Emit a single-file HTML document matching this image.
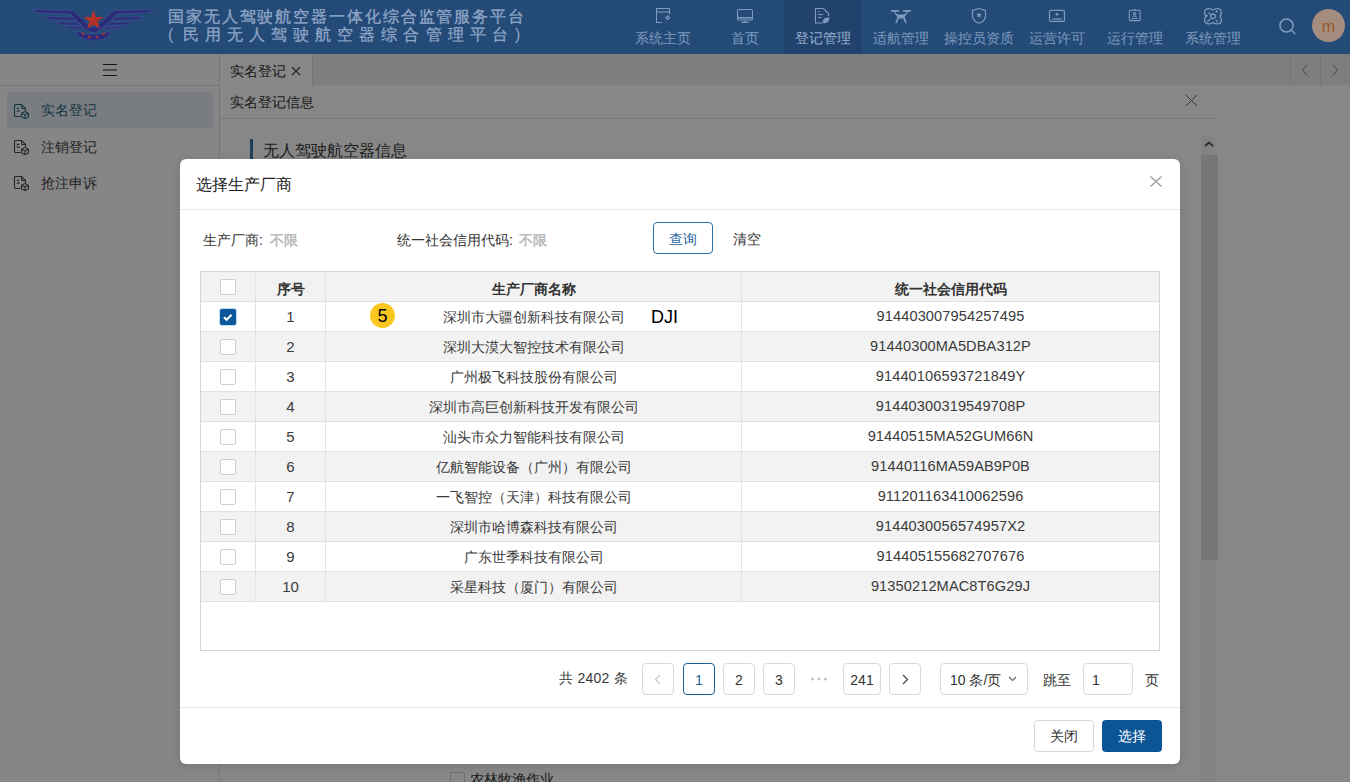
<!DOCTYPE html>
<html><head><meta charset="utf-8">
<style>
*{box-sizing:border-box;margin:0;padding:0}
html,body{width:1350px;height:782px;overflow:hidden;background:#fff;font-family:"Liberation Sans",sans-serif;color:#333}
.t{position:absolute;white-space:nowrap;line-height:1}
#hdr{position:absolute;left:0;top:0;width:1350px;height:54px;background:#244a77}
#side{position:absolute;left:0;top:54px;width:220px;height:728px;background:#fdfdfd;border-right:1px solid #e0e0e0}
#tabs{position:absolute;left:220px;top:54px;width:1130px;height:32px;background:#efefef;border-bottom:1px solid #d4d4d4}
#main{position:absolute;left:220px;top:85px;width:1130px;height:697px;background:#fff}
#mask{position:absolute;left:0;top:0;width:1350px;height:782px;background:rgba(0,0,0,.47)}
#dlg{position:absolute;left:180px;top:159px;width:1000px;height:605px;background:#fff;border-radius:6px;box-shadow:0 2px 8px rgba(0,0,0,.12)}
.nav{position:absolute;top:0;height:54px;text-align:center;color:#7f9abd;font-size:14px}
.nav span{position:absolute;left:0;right:0;top:31px;line-height:14px}
</style></head><body>
<div id="side">
  <svg style="position:absolute;left:102px;top:9px" width="16" height="14" viewBox="0 0 16 14" stroke="#222" stroke-width="1.1"><path d="M1 1.5h14M1 7h14M1 12.5h14"/></svg>
  <div style="position:absolute;left:0;top:31px;width:219px;height:1px;background:#dcdcdc"></div>
  <div style="position:absolute;left:7px;top:38px;width:206px;height:36px;background:#e5ecf3;border-radius:2px"></div>
  <svg style="position:absolute;left:13px;top:50px" width="18" height="16" viewBox="13 104 18 16" fill="none" stroke="#2c6a7e" stroke-width="1.1"><path d="M20.5 116.5H15.5Q14.5 116.5 14.5 115.5V105.5Q14.5 104.5 15.5 104.5H21.5L25.5 108.5V111"/><path d="M21.5 104.5V107.5Q21.5 108.5 22.5 108.5H25.5"/><path d="M16.8 108.3h2.2M16.8 111.2h3" stroke-width="1.3"/><path d="M21.5 113.3L25 111.6L28.5 113.3V117L25 118.7L21.5 117Z M21.5 113.3L25 115L28.5 113.3 M25 115V118.7"/></svg>
  <svg style="position:absolute;left:13px;top:86px" width="18" height="16" viewBox="13 104 18 16" fill="none" stroke="#4a4a4a" stroke-width="1.1"><path d="M20.5 116.5H15.5Q14.5 116.5 14.5 115.5V105.5Q14.5 104.5 15.5 104.5H21.5L25.5 108.5V111"/><path d="M21.5 104.5V107.5Q21.5 108.5 22.5 108.5H25.5"/><path d="M16.8 108.3h2.2M16.8 111.2h3" stroke-width="1.3"/><path d="M21.5 113.3L25 111.6L28.5 113.3V117L25 118.7L21.5 117Z M21.5 113.3L25 115L28.5 113.3 M25 115V118.7"/></svg>
  <svg style="position:absolute;left:13px;top:122px" width="18" height="16" viewBox="13 104 18 16" fill="none" stroke="#4a4a4a" stroke-width="1.1"><path d="M20.5 116.5H15.5Q14.5 116.5 14.5 115.5V105.5Q14.5 104.5 15.5 104.5H21.5L25.5 108.5V111"/><path d="M21.5 104.5V107.5Q21.5 108.5 22.5 108.5H25.5"/><path d="M16.8 108.3h2.2M16.8 111.2h3" stroke-width="1.3"/><path d="M21.5 113.3L25 111.6L28.5 113.3V117L25 118.7L21.5 117Z M21.5 113.3L25 115L28.5 113.3 M25 115V118.7"/></svg>
  <div class="t" style="left:41px;top:49px;font-size:14px;color:#2c6a7e">实名登记</div>
  <div class="t" style="left:41px;top:86px;font-size:14px;color:#444">注销登记</div>
  <div class="t" style="left:41px;top:122px;font-size:14px;color:#444">抢注申诉</div>
</div>
<div id="tabs">
  <div style="position:absolute;left:0;top:0;width:93px;height:31px;background:#fff;border-right:1px solid #d9d9d9"></div>
  <div class="t" style="left:10px;top:10px;font-size:14px;color:#333">实名登记</div><svg style="position:absolute;left:71px;top:12px" width="10" height="10" viewBox="0 0 10 10" stroke="#444" stroke-width="1.1"><path d="M1 1l8 8M9 1l-8 8"/></svg>
  <div style="position:absolute;left:1070px;top:0;width:1px;height:31px;background:#d9d9d9"></div>
  <div style="position:absolute;left:1100px;top:0;width:1px;height:31px;background:#d9d9d9"></div>
  <svg style="position:absolute;left:1081px;top:10px" width="8" height="12" viewBox="0 0 8 12" fill="none" stroke="#888" stroke-width="1"><path d="M6 1L1.5 6 6 11"/></svg>
  <svg style="position:absolute;left:1111px;top:10px" width="8" height="12" viewBox="0 0 8 12" fill="none" stroke="#888" stroke-width="1"><path d="M2 1l4.5 5L2 11"/></svg>
</div>
<div id="main">
  <div class="t" style="left:10px;top:10px;font-size:14px;color:#333">实名登记信息</div>
  <svg style="position:absolute;left:965px;top:9px" width="13" height="13" viewBox="0 0 13 13" stroke="#666" stroke-width="1"><path d="M1 1l11 11M12 1L1 12"/></svg>
  <div style="position:absolute;left:0;top:33px;width:997px;height:1px;background:#e4e4e4"></div>
  <div style="position:absolute;left:30px;top:54px;width:3px;height:21px;background:#3a7aa6"></div>
  <div class="t" style="left:43px;top:58px;font-size:16px;color:#3a3a3a">无人驾驶航空器信息</div>
  <div style="position:absolute;left:981px;top:50px;width:16px;height:647px;background:#f7f7f7"></div>
  <svg style="position:absolute;left:984px;top:56px" width="10" height="6" viewBox="0 0 10 6" stroke="#555" stroke-width="2" fill="none"><path d="M1 5l4-3.5L9 5"/></svg>
  <div style="position:absolute;left:981px;top:70px;width:17px;height:405px;background:#e0e0e0"></div>
  <div style="position:absolute;left:230px;top:687px;width:15px;height:15px;border:1px solid #ccc;border-radius:2px;background:#fff"></div>
  <div class="t" style="left:250px;top:687px;font-size:14px;color:#333">农林牧渔作业</div>
</div>
<div id="mask"></div>
<div id="hdr">
    <div class="t" style="left:168px;top:9px;font-size:16px;color:#8ea5c5;-webkit-text-stroke:0.35px #8ea5c5;letter-spacing:1.9px">国家无人驾驶航空器一体化综合监管服务平台</div>
  <div class="t" style="left:168px;top:27px;font-size:16px;color:#8ea5c5">(</div><div class="t" style="left:182.5px;top:27px;font-size:16px;color:#8ea5c5;-webkit-text-stroke:0.3px #8ea5c5;letter-spacing:6.1px">民用无人驾驶航空器综合管理平台</div><div class="t" style="left:515px;top:27px;font-size:16px;color:#8ea5c5">)</div>

  <div class="nav" style="left:784px;width:77px;background:#20426c"></div>
  <div class="nav" style="left:629px;width:68px"><span>系统主页</span></div>
  <div class="nav" style="left:717px;width:56px"><span>首页</span></div>
  <div class="nav" style="left:784px;width:77px"><span style="color:#9ab0cf">登记管理</span></div>
  <div class="nav" style="left:862px;width:78px"><span>适航管理</span></div>
  <div class="nav" style="left:940px;width:78px"><span>操控员资质</span></div>
  <div class="nav" style="left:1018px;width:78px"><span>运营许可</span></div>
  <div class="nav" style="left:1096px;width:78px"><span>运行管理</span></div>
  <div class="nav" style="left:1174px;width:78px"><span>系统管理</span></div>
  <svg style="position:absolute;left:0;top:0" width="1250" height="30" viewBox="0 0 1250 30" fill="none" stroke="#7f9abd" stroke-width="1.1">
    <path d="M662 22.5H656.5V8.5H669.5V14.5"/><path d="M656.5 12H669.5"/><path d="M665.7 17.8l1.9-1.9 1.9 1.9-1.9 1.9z" stroke-width="1.2"/>
    <rect x="737.5" y="9.5" width="15" height="10.5" rx="1.5"/><path d="M738 17.8h14" stroke-width="1.6"/><path d="M741.5 22.3h7" stroke-width="1.4"/><path d="M745 20v2"/>
    <path d="M822 23H815.5V8.5H823.5L828.5 13.5V16"/><path d="M818 11.5h1.5M818 14.5h5M818 17.5h3.5" stroke-width="1.2"/><path fill="#7f9abd" stroke="none" d="M822.5 23.3 C822.5 19 825 17 829.5 17.5 C829.5 21.5 827 23.5 822.5 23.3Z"/>
    <path d="M891 10.8h8M903 10.8h8" stroke-width="1.8"/><path d="M895 11v2.5M907 11v2.5" stroke-width="1.2"/><path fill="#7f9abd" stroke="none" d="M894.5 13 L899 14.5 H903 L907.5 13 L905 16.5 L904.5 18.5 H897.5 L897 16.5Z"/><path d="M898 18l-2 5M904 18l2 5" stroke-width="1.8"/>
    <path d="M979 8.5 L985.5 10.5 V15.5 Q985.5 21 979 23.3 Q972.5 21 972.5 15.5 V10.5 Z" stroke-width="1.2"/><path fill="#7f9abd" stroke="none" d="M979 12.3l.85 1.75 1.9.25-1.4 1.3.35 1.9L979 16.6l-1.7.9.35-1.9-1.4-1.3 1.9-.25z"/>
    <rect x="1049.5" y="10.3" width="15" height="11" rx="1.3" stroke-width="1.2"/><circle cx="1057" cy="14.3" r="1.4" fill="#7f9abd" stroke="none"/><path d="M1052.5 19h9" stroke-width="1.3"/>
    <rect x="1129.3" y="10.2" width="10.8" height="10.4" rx="0.8" stroke-width="1.1"/><path fill="#7f9abd" stroke="none" d="M1133.2 10.3l1.4-1.6 1.4 1.6z"/><circle cx="1134.6" cy="13.8" r="1.3"/><path d="M1132.4 17.2 Q1134.6 14.8 1136.8 17.2" stroke-width="0.9"/><path d="M1131.5 18.6h6.3" stroke-width="0.9"/>
    <path d="M1205.5 9.5 Q1209.5 7.5 1213 10 Q1216.5 7.5 1220.5 9.5 Q1222.5 13 1220 16.3 Q1222.5 19.5 1220.5 23 Q1216.5 25 1213 22.5 Q1209.5 25 1205.5 23 Q1203.5 19.5 1206 16.3 Q1203.5 13 1205.5 9.5Z" stroke-width="1.3"/><circle cx="1213" cy="16.3" r="2.3" stroke-width="1.4"/><circle cx="1216.7" cy="11.5" r="1.1" fill="#7f9abd" stroke="none"/><circle cx="1216.7" cy="21" r="1.1" fill="#7f9abd" stroke="none"/><circle cx="1206.8" cy="15.8" r="1.1" fill="#7f9abd" stroke="none"/><path d="M1210.5 19l-3.5 3M1208.5 12.5l2 2"/>
  </svg>
  <svg style="position:absolute;left:1279px;top:18px" width="18" height="17" viewBox="0 0 18 17" fill="none" stroke="#7f9abd" stroke-width="1.6"><circle cx="7.5" cy="7.5" r="6.5"/><path d="M12.5 12.5l4 3.5"/></svg>
</div>
<div style="position:absolute;left:1312px;top:9px;width:33px;height:33px;border-radius:50%;background:#a48c7e"></div>
<div class="t" style="left:1312px;top:19px;width:33px;text-align:center;font-size:16px;color:#9c5a26">m</div>
<svg style="position:absolute;left:0;top:0" width="190" height="54" viewBox="0 0 190 54">
<g fill="#2b2b7a" stroke="#3f5290" stroke-width="0.7"><path d="M31 9.5 L73 10.5 L91 27 L87 30.5 L70 14 L40 13 Z"/><path d="M44 16.5 L73 17.3 L75.5 20.3 L50 19.7 Z"/><path d="M55 22 L77.5 22.5 L80 25.3 L60 24.7 Z"/><path d="M63 26.6 L82 27 L84 29.2 L68 28.8 Z"/><path d="M 156.0 9.5 L 114.0 10.5 L 96.0 27.0 L 100.0 30.5 L 117.0 14.0 L 147.0 13.0 Z"/><path d="M 143.0 16.5 L 114.0 17.3 L 111.5 20.3 L 137.0 19.7 Z"/><path d="M 132.0 22.0 L 109.5 22.5 L 107.0 25.3 L 127.0 24.7 Z"/><path d="M 124.0 26.6 L 105.0 27.0 L 103.0 29.2 L 119.0 28.8 Z"/>
<ellipse cx="93.5" cy="29.5" rx="6" ry="3"/>
<path d="M76 31 Q93.5 38 111 31 L108 37 Q93.5 44 79 37 Z"/></g>
<path fill="#b3322a" d="M93.5 10 L96.1 17 L103.6 17 L97.6 21.6 L99.9 28.8 L93.5 24.6 L87.1 28.8 L89.4 21.6 L83.4 17 L90.9 17 Z"/>
<g fill="#a83838"><circle cx="83" cy="33.7" r="1.3"/><circle cx="89.3" cy="37" r="1.3"/><circle cx="97.3" cy="37" r="1.3"/><circle cx="103.6" cy="33.7" r="1.3"/></g>
</svg>


<div id="dlg">
<div class="t" style="left:16px;top:18px;font-size:16px;color:#222">选择生产厂商</div>
<svg style="position:absolute;left:970px;top:17px" width="12" height="11" viewBox="0 0 12 11" stroke="#999" stroke-width="1.2"><path d="M0.5 0.5l11 10M11.5 0.5l-11 10"/></svg>
<div style="position:absolute;left:0;top:50px;width:1000px;height:1px;background:#e8e8e8"></div>
<div class="t" style="left:23px;top:74px;font-size:14px;color:#333">生产厂商: <b style="color:#bbb;margin-left:3px">不限</b></div>
<div class="t" style="left:217px;top:74px;font-size:14px;color:#333">统一社会信用代码: <b style="color:#bbb;margin-left:2px">不限</b></div>
<div style="position:absolute;left:473px;top:63px;width:60px;height:32px;border:1px solid #2c6ea6;border-radius:4px"></div>
<div class="t" style="left:473px;top:73px;width:60px;text-align:center;font-size:14px;color:#1f64a0">查询</div>
<div class="t" style="left:553px;top:73px;font-size:14px;color:#333">清空</div>
<div style="position:absolute;left:20px;top:112px;width:960px;height:380px;border:1px solid #d4d4d4;background:#fff"></div>
<div style="position:absolute;left:21px;top:113px;width:958px;height:30px;background:#f2f2f2"></div>
<div style="position:absolute;left:21px;top:142px;width:958px;height:31px;border-top:1px solid #e2e2e2;background:#fff"></div>
<div style="position:absolute;left:21px;top:172px;width:958px;height:31px;border-top:1px solid #e2e2e2;background:#f2f2f2"></div>
<div style="position:absolute;left:21px;top:202px;width:958px;height:31px;border-top:1px solid #e2e2e2;background:#fff"></div>
<div style="position:absolute;left:21px;top:232px;width:958px;height:31px;border-top:1px solid #e2e2e2;background:#f2f2f2"></div>
<div style="position:absolute;left:21px;top:262px;width:958px;height:31px;border-top:1px solid #e2e2e2;background:#fff"></div>
<div style="position:absolute;left:21px;top:292px;width:958px;height:31px;border-top:1px solid #e2e2e2;background:#f2f2f2"></div>
<div style="position:absolute;left:21px;top:322px;width:958px;height:31px;border-top:1px solid #e2e2e2;background:#fff"></div>
<div style="position:absolute;left:21px;top:352px;width:958px;height:31px;border-top:1px solid #e2e2e2;background:#f2f2f2"></div>
<div style="position:absolute;left:21px;top:382px;width:958px;height:31px;border-top:1px solid #e2e2e2;background:#fff"></div>
<div style="position:absolute;left:21px;top:412px;width:958px;height:31px;border-top:1px solid #e2e2e2;background:#f2f2f2"></div>
<div style="position:absolute;left:21px;top:442px;width:958px;height:1px;background:#e2e2e2"></div>
<div style="position:absolute;left:75px;top:113px;width:1px;height:330px;background:#e4e4e4"></div>
<div style="position:absolute;left:145px;top:113px;width:1px;height:330px;background:#e4e4e4"></div>
<div style="position:absolute;left:561px;top:113px;width:1px;height:330px;background:#e4e4e4"></div>
<div class="t" style="left:76px;top:123px;width:69px;text-align:center;font-size:14px;font-weight:bold;color:#333">序号</div>
<div class="t" style="left:146px;top:123px;width:415px;text-align:center;font-size:14px;font-weight:bold;color:#333">生产厂商名称</div>
<div class="t" style="left:562px;top:123px;width:417px;text-align:center;font-size:14px;font-weight:bold;color:#333">统一社会信用代码</div>
<div style="position:absolute;left:40px;top:120px;width:16px;height:16px;border:1px solid #cfcfcf;border-radius:2px;background:#fff"></div>
<div style="position:absolute;left:39px;top:149px;width:18px;height:18px;border-radius:3px;background:#bcdcf5"></div>
<div style="position:absolute;left:40px;top:150px;width:16px;height:16px;border-radius:2px;background:#0b5799"></div>
<svg style="position:absolute;left:40px;top:150px" width="16" height="16" viewBox="0 0 16 16" fill="none" stroke="#fff" stroke-width="2.2"><path d="M4 8.3l2.6 2.4 5-5"/></svg>
<div class="t" style="left:76px;top:150px;width:69px;text-align:center;font-size:15px;color:#3a3a3a">1</div>
<div class="t" style="left:146px;top:151px;width:415px;text-align:center;font-size:14px;color:#3a3a3a">深圳市大疆创新科技有限公司</div>
<div class="t" style="left:562px;top:150px;width:417px;text-align:center;font-size:14.6px;color:#3a3a3a;letter-spacing:.1px">914403007954257495</div>
<div style="position:absolute;left:40px;top:180px;width:16px;height:16px;border:1px solid #cfcfcf;border-radius:2px;background:#fff"></div>
<div class="t" style="left:76px;top:180px;width:69px;text-align:center;font-size:15px;color:#3a3a3a">2</div>
<div class="t" style="left:146px;top:181px;width:415px;text-align:center;font-size:14px;color:#3a3a3a">深圳大漠大智控技术有限公司</div>
<div class="t" style="left:562px;top:180px;width:417px;text-align:center;font-size:14.6px;color:#3a3a3a;letter-spacing:.1px">91440300MA5DBA312P</div>
<div style="position:absolute;left:40px;top:210px;width:16px;height:16px;border:1px solid #cfcfcf;border-radius:2px;background:#fff"></div>
<div class="t" style="left:76px;top:210px;width:69px;text-align:center;font-size:15px;color:#3a3a3a">3</div>
<div class="t" style="left:146px;top:211px;width:415px;text-align:center;font-size:14px;color:#3a3a3a">广州极飞科技股份有限公司</div>
<div class="t" style="left:562px;top:210px;width:417px;text-align:center;font-size:14.6px;color:#3a3a3a;letter-spacing:.1px">91440106593721849Y</div>
<div style="position:absolute;left:40px;top:240px;width:16px;height:16px;border:1px solid #cfcfcf;border-radius:2px;background:#fff"></div>
<div class="t" style="left:76px;top:240px;width:69px;text-align:center;font-size:15px;color:#3a3a3a">4</div>
<div class="t" style="left:146px;top:241px;width:415px;text-align:center;font-size:14px;color:#3a3a3a">深圳市高巨创新科技开发有限公司</div>
<div class="t" style="left:562px;top:240px;width:417px;text-align:center;font-size:14.6px;color:#3a3a3a;letter-spacing:.1px">91440300319549708P</div>
<div style="position:absolute;left:40px;top:270px;width:16px;height:16px;border:1px solid #cfcfcf;border-radius:2px;background:#fff"></div>
<div class="t" style="left:76px;top:270px;width:69px;text-align:center;font-size:15px;color:#3a3a3a">5</div>
<div class="t" style="left:146px;top:271px;width:415px;text-align:center;font-size:14px;color:#3a3a3a">汕头市众力智能科技有限公司</div>
<div class="t" style="left:562px;top:270px;width:417px;text-align:center;font-size:14.6px;color:#3a3a3a;letter-spacing:.1px">91440515MA52GUM66N</div>
<div style="position:absolute;left:40px;top:300px;width:16px;height:16px;border:1px solid #cfcfcf;border-radius:2px;background:#fff"></div>
<div class="t" style="left:76px;top:300px;width:69px;text-align:center;font-size:15px;color:#3a3a3a">6</div>
<div class="t" style="left:146px;top:301px;width:415px;text-align:center;font-size:14px;color:#3a3a3a">亿航智能设备（广州）有限公司</div>
<div class="t" style="left:562px;top:300px;width:417px;text-align:center;font-size:14.6px;color:#3a3a3a;letter-spacing:.1px">91440116MA59AB9P0B</div>
<div style="position:absolute;left:40px;top:330px;width:16px;height:16px;border:1px solid #cfcfcf;border-radius:2px;background:#fff"></div>
<div class="t" style="left:76px;top:330px;width:69px;text-align:center;font-size:15px;color:#3a3a3a">7</div>
<div class="t" style="left:146px;top:331px;width:415px;text-align:center;font-size:14px;color:#3a3a3a">一飞智控（天津）科技有限公司</div>
<div class="t" style="left:562px;top:330px;width:417px;text-align:center;font-size:14.6px;color:#3a3a3a;letter-spacing:.1px">911201163410062596</div>
<div style="position:absolute;left:40px;top:360px;width:16px;height:16px;border:1px solid #cfcfcf;border-radius:2px;background:#fff"></div>
<div class="t" style="left:76px;top:360px;width:69px;text-align:center;font-size:15px;color:#3a3a3a">8</div>
<div class="t" style="left:146px;top:361px;width:415px;text-align:center;font-size:14px;color:#3a3a3a">深圳市哈博森科技有限公司</div>
<div class="t" style="left:562px;top:360px;width:417px;text-align:center;font-size:14.6px;color:#3a3a3a;letter-spacing:.1px">9144030056574957X2</div>
<div style="position:absolute;left:40px;top:390px;width:16px;height:16px;border:1px solid #cfcfcf;border-radius:2px;background:#fff"></div>
<div class="t" style="left:76px;top:390px;width:69px;text-align:center;font-size:15px;color:#3a3a3a">9</div>
<div class="t" style="left:146px;top:391px;width:415px;text-align:center;font-size:14px;color:#3a3a3a">广东世季科技有限公司</div>
<div class="t" style="left:562px;top:390px;width:417px;text-align:center;font-size:14.6px;color:#3a3a3a;letter-spacing:.1px">914405155682707676</div>
<div style="position:absolute;left:40px;top:420px;width:16px;height:16px;border:1px solid #cfcfcf;border-radius:2px;background:#fff"></div>
<div class="t" style="left:76px;top:420px;width:69px;text-align:center;font-size:15px;color:#3a3a3a">10</div>
<div class="t" style="left:146px;top:421px;width:415px;text-align:center;font-size:14px;color:#3a3a3a">采星科技（厦门）有限公司</div>
<div class="t" style="left:562px;top:420px;width:417px;text-align:center;font-size:14.6px;color:#3a3a3a;letter-spacing:.1px">91350212MAC8T6G29J</div>
<div style="position:absolute;left:190px;top:144px;width:25px;height:25px;border-radius:50%;background:#fbc71f"></div>
<div class="t" style="left:190px;top:148px;width:25px;text-align:center;font-size:18px;color:#000">5</div>
<div class="t" style="left:471px;top:149px;font-size:18px;color:#000">DJI</div>
<div class="t" style="left:379px;top:512px;font-size:14px;color:#3a3a3a;letter-spacing:.25px">共 2402 条</div>
<div style="position:absolute;left:462px;top:504px;width:32px;height:32px;border:1px solid #d9d9d9;border-radius:4px;background:#fff"></div>
<svg style="position:absolute;left:474px;top:515px" width="7" height="11" viewBox="0 0 7 11" fill="none" stroke="#c8c8c8" stroke-width="1.2"><path d="M6 1L1.5 5.5 6 10"/></svg>
<div style="position:absolute;left:503px;top:504px;width:32px;height:32px;border:1px solid #1d5f93;border-radius:4px;background:#fff"></div>
<div class="t" style="left:503px;top:514px;width:32px;text-align:center;font-size:14px;color:#1d5f93">1</div>
<div style="position:absolute;left:543px;top:504px;width:32px;height:32px;border:1px solid #d9d9d9;border-radius:4px;background:#fff"></div>
<div class="t" style="left:543px;top:514px;width:32px;text-align:center;font-size:14px;color:#333">2</div>
<div style="position:absolute;left:583px;top:504px;width:32px;height:32px;border:1px solid #d9d9d9;border-radius:4px;background:#fff"></div>
<div class="t" style="left:583px;top:514px;width:32px;text-align:center;font-size:14px;color:#333">3</div>
<svg style="position:absolute;left:630px;top:518px" width="18" height="4" viewBox="0 0 18 4" fill="#c4c4c4"><circle cx="2.5" cy="2" r="1.6"/><circle cx="9" cy="2" r="1.6"/><circle cx="15.5" cy="2" r="1.6"/></svg>
<div style="position:absolute;left:663px;top:504px;width:38px;height:32px;border:1px solid #d9d9d9;border-radius:4px;background:#fff"></div>
<div class="t" style="left:663px;top:514px;width:38px;text-align:center;font-size:14px;color:#333">241</div>
<div style="position:absolute;left:709px;top:504px;width:32px;height:32px;border:1px solid #d9d9d9;border-radius:4px;background:#fff"></div>
<svg style="position:absolute;left:722px;top:515px" width="7" height="11" viewBox="0 0 7 11" fill="none" stroke="#444" stroke-width="1.2"><path d="M1 1l4.5 4.5L1 10"/></svg>
<div style="position:absolute;left:760px;top:504px;width:88px;height:32px;border:1px solid #d9d9d9;border-radius:4px;background:#fff"></div>
<div class="t" style="left:770px;top:514px;font-size:14px;color:#333">10 条/页</div>
<svg style="position:absolute;left:828px;top:517px" width="9" height="6" viewBox="0 0 9 6" fill="none" stroke="#666" stroke-width="1.1"><path d="M1 1l3.5 3.5L8 1"/></svg>
<div class="t" style="left:863px;top:514px;font-size:14px;color:#333">跳至</div>
<div style="position:absolute;left:903px;top:504px;width:50px;height:32px;border:1px solid #d9d9d9;border-radius:4px;background:#fff"></div>
<div class="t" style="left:912px;top:514px;font-size:14px;color:#333">1</div>
<div class="t" style="left:965px;top:514px;font-size:14px;color:#333">页</div>
<div style="position:absolute;left:0;top:548px;width:1000px;height:1px;background:#e8e8e8"></div>
<div style="position:absolute;left:854px;top:561px;width:60px;height:32px;border:1px solid #d9d9d9;border-radius:4px;background:#fff"></div>
<div class="t" style="left:854px;top:570px;width:60px;text-align:center;font-size:14px;color:#333">关闭</div>
<div style="position:absolute;left:922px;top:561px;width:60px;height:32px;border-radius:4px;background:#0b5597"></div>
<div class="t" style="left:922px;top:570px;width:60px;text-align:center;font-size:14px;color:#fff">选择</div>
</div>
</body></html>
